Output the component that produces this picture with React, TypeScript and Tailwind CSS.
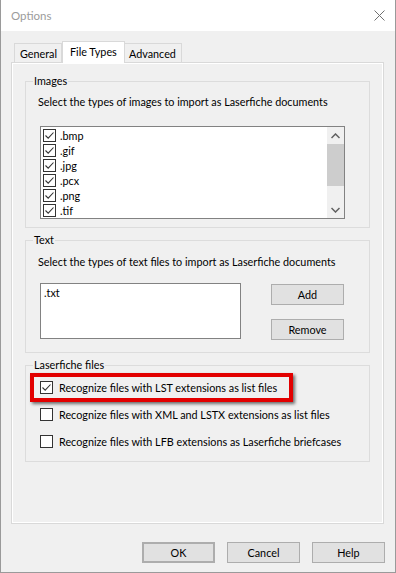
import React from "react";

function Check({ checked }: { checked: boolean }) {
  return (
    <div className="w-[13px] h-[13px] border border-[#333333] bg-white flex items-center justify-center shrink-0">
      {checked && (
        <svg width="11" height="11" viewBox="0 0 11 11">
          <path d="M1.5 5.5 L4.2 8.2 L9.5 2.5" fill="none" stroke="#333333" strokeWidth="1.1" />
        </svg>
      )}
    </div>
  );
}

function Group({ label, className, children }: { label: string; className: string; children: React.ReactNode }) {
  return (
    <div className={"relative border border-[#dcdcdc] " + className}>
      <span className="absolute -top-[9px] left-[7px] bg-[#f0f0f0] px-[1px] leading-[15px]">{label}</span>
      {children}
    </div>
  );
}

function Btn({ label, className }: { label: string; className?: string }) {
  return (
    <div className={"w-[73px] h-[21px] border border-[#adadad] bg-[#e1e1e1] flex items-center justify-center leading-[15px] " + (className || "")}>
      {label}
    </div>
  );
}

export default function App() {
  const imgs = [".bmp", ".gif", ".jpg", ".pcx", ".png", ".tif"];
  return (
    <div
      className="w-[396px] h-[573px] bg-[#f0f0f0] border-l border-r border-b border-[#9a9a9a] flex flex-col text-[10.8px] text-black overflow-hidden whitespace-nowrap"
      style={{ fontFamily: 'Lato, "Liberation Sans", Arial, sans-serif' }}
    >
      {/* title bar */}
      <div className="h-[31px] bg-white flex items-center justify-between pl-[10px] pr-[9px] shrink-0">
        <span className="text-[#9b9b9b] text-[11.5px]">Options</span>
        <svg width="11" height="11" viewBox="0 0 11 11" className="mr-[1px]">
          <path d="M0.5 0.5 L10.5 10.5 M10.5 0.5 L0.5 10.5" stroke="#707070" strokeWidth="1" />
        </svg>
      </div>

      {/* tabs */}
      <div className="pl-[10px] pr-[11px] mt-[10px] flex flex-col">
        <div className="flex items-end h-[21px] pl-[3px] relative z-10">
          <div className="h-[19px] w-[48px] border border-b-0 border-[#d9d9d9] flex items-center pl-[5px] leading-[15px]">General</div>
          <div className="h-[22px] w-[63px] -mb-[1px] border border-b-0 border-[#d9d9d9] bg-white flex items-center pl-[7px] pb-[2px] leading-[15px]">File Types</div>
          <div className="h-[19px] w-[57px] border border-b-0 border-l-0 border-[#d9d9d9] flex items-center pl-[4px] leading-[15px]">Advanced</div>
        </div>
        <div className="h-[462px] border border-[#d9d9d9]">
          <div className="h-full border border-white pl-[12px] pr-[12px] pt-[17px] flex flex-col">
            {/* Images */}
            <Group label="Images" className="h-[147px] pl-[12px]">
              <div className="mt-[12px] leading-[15px]">Select the types of images to import as Laserfiche documents</div>
              <div className="mt-[17px] ml-[2px] w-[305px] h-[93px] border border-[#828282] bg-white flex">
                <div className="flex-1 flex flex-col pt-[1px] pl-[2px]">
                  {imgs.map((t) => (
                    <div key={t} className="h-[15px] flex items-center gap-[4px]">
                      <Check checked />
                      <span className="leading-[15px]">{t}</span>
                    </div>
                  ))}
                </div>
                <div className="w-[17px] bg-[#f0f0f0] flex flex-col">
                  <div className="h-[17px] flex items-center justify-center">
                    <svg width="9" height="6" viewBox="0 0 9 6">
                      <path d="M0.5 5 L4.5 1 L8.5 5" fill="none" stroke="#606060" strokeWidth="1.5" />
                    </svg>
                  </div>
                  <div className="h-[42px] bg-[#cdcdcd]" />
                  <div className="flex-1" />
                  <div className="h-[17px] flex items-center justify-center">
                    <svg width="9" height="6" viewBox="0 0 9 6">
                      <path d="M0.5 1 L4.5 5 L8.5 1" fill="none" stroke="#606060" strokeWidth="1.5" />
                    </svg>
                  </div>
                </div>
              </div>
            </Group>

            {/* Text */}
            <Group label="Text" className="mt-[12px] h-[113px] pl-[12px]">
              <div className="mt-[13px] leading-[15px]">Select the types of text files to import as Laserfiche documents</div>
              <div className="mt-[14px] ml-[2px] flex">
                <div className="w-[201px] h-[56px] border border-[#828282] bg-white pl-[3px] pt-[1px] leading-[15px]">.txt</div>
                <div className="ml-[30px] flex flex-col gap-[14px] pt-[1px]">
                  <Btn label="Add" />
                  <Btn label="Remove" />
                </div>
              </div>
            </Group>

            {/* Laserfiche files */}
            <Group label="Laserfiche files" className="mt-[12px] h-[97px] pl-[4px]">
              <div className="mt-[7px] w-[263px] h-[29px] border-[4px] border-[#e20000] shadow-[2px_2px_3px_rgba(0,0,0,0.55)] flex items-center pl-[6px] gap-[6px]">
                <Check checked />
                <span className="leading-[15px]">Recognize files with LST extensions as list files</span>
              </div>
              <div className="mt-[5px] ml-[10px] h-[15px] flex items-center gap-[6px]">
                <Check checked={false} />
                <span className="leading-[15px]">Recognize files with XML and LSTX extensions as list files</span>
              </div>
              <div className="mt-[12px] ml-[10px] h-[15px] flex items-center gap-[6px]">
                <Check checked={false} />
                <span className="leading-[15px]">Recognize files with LFB extensions as Laserfiche briefcases</span>
              </div>
            </Group>
          </div>
        </div>
      </div>

      {/* bottom buttons */}
      <div className="mt-[18px] flex justify-end gap-[12px] pr-[10px]">
        <Btn label="OK" className="border-2 border-[#0078d7]" />
        <Btn label="Cancel" />
        <Btn label="Help" />
      </div>
    </div>
  );
}
